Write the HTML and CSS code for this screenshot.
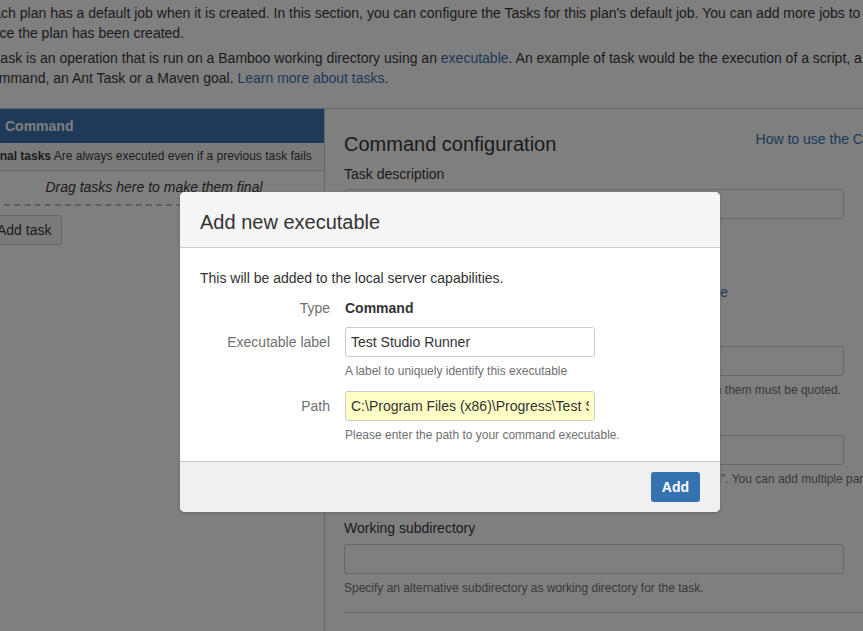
FILE: index.html
```html
<!DOCTYPE html>
<html>
<head>
<meta charset="utf-8">
<link rel="stylesheet" href="styles.css">
</head>
<body>
<div class="page">
  <div class="intro">
    <p>Each plan has a default job when it is created. In this section, you can configure the Tasks for this plan's default job. You can add more jobs to this plan once the plan has been created.</p>
    <p>A task is an operation that is run on a Bamboo working directory using an <a href="#">executable</a>. An example of task would be the execution of a script, a shell command, an Ant Task or a Maven goal. <a href="#">Learn more about tasks</a>.</p>
  </div>
  <div class="tasks">
    <div class="task-list">
      <div class="task-head">Command</div>
      <div class="final-row"><b>Final tasks</b> Are always executed even if a previous task fails</div>
      <div class="drop">Drag tasks here to make them final</div>
      <button class="btn">Add task</button>
    </div>
    <div class="config">
      <a class="help-link" href="#">How to use the Command task</a>
      <h2 class="title">Command configuration</h2>
      <div class="field first">
        <label class="lbl">Task description</label>
        <input class="text" type="text">
      </div>
      <div class="check-row"><input type="checkbox"> Disable this task</div>
      <div class="field exec">
        <label class="lbl">Executable</label>
        <div class="exec-row"><select class="sel"><option>Test Studio Runner</option></select><a href="#">Add new executable</a></div>
      </div>
      <div class="field arg">
        <label class="lbl">Argument</label>
        <input class="text" type="text">
        <div class="desc">Argument you want to pass to the command. Arguments with spaces in them must be quoted.</div>
      </div>
      <div class="field env">
        <label class="lbl">Environment variables</label>
        <input class="text" type="text">
        <div class="desc">Extra environment variables. e.g. JAVA_OPTS="-Xmx256m -Xms128m". You can add multiple parameters separated by a space.</div>
      </div>
      <div class="field wide">
        <label class="lbl">Working subdirectory</label>
        <input class="text" type="text">
        <div class="desc">Specify an alternative subdirectory as working directory for the task.</div>
      </div>
      <hr class="rule">
    </div>
  </div>
</div>

<div class="dialog">
  <div class="dlg-head">Add new executable</div>
  <div class="dlg-body">
    <p class="dlg-intro">This will be added to the local server capabilities.</p>
    <div class="frow"><span class="flabel">Type</span><strong class="fval">Command</strong></div>
    <div class="frow">
      <span class="flabel pad">Executable label</span>
      <div class="fcol">
        <input class="dlg-input" type="text" value="Test Studio Runner">
        <div class="fdesc">A label to uniquely identify this executable</div>
      </div>
    </div>
    <div class="frow">
      <span class="flabel pad">Path</span>
      <div class="fcol">
        <input class="dlg-input path" type="text" value="C:\Program Files (x86)\Progress\Test Studio\Bin\ArtOfTest.Runner.exe">
        <div class="fdesc">Please enter the path to your command executable.</div>
      </div>
    </div>
  </div>
  <div class="dlg-foot"><button class="primary">Add</button></div>
</div>
</body>
</html>
```

FILE: styles.css
```css
/* The page behind the modal is drawn with its colours already dimmed by the 50% black backdrop. */
* { box-sizing: border-box; }
html, body { margin: 0; padding: 0; }
html { overflow: hidden; background: #7f7f7f; }
body {
  font-family: "Liberation Sans", Arial, sans-serif;
  font-size: 14px;
  line-height: 20px;
  color: #1a1a1a;
  background: #7f7f7f;
  width: 863px;
  height: 631px;
  overflow: hidden;
  position: relative;
}
a { color: #1b3958; text-decoration: none; }

.page { margin-left: -16px; width: 960px; padding-top: 3px; }
.intro p { margin: 0 0 5px; }
.intro { padding-bottom: 15px; }

.tasks {
  display: grid;
  grid-template-columns: 341px 1fr;
  border-top: 1px solid #666;
  height: 600px;
}
.task-list { border-right: 1px solid #666; }
.task-head {
  background: #1e3a58;
  color: #7f7f7f;
  font-weight: bold;
  padding: 7px 21px;
}
.final-row {
  background: #7a7a7a;
  border-bottom: 1px solid #666;
  font-size: 12px;
  padding: 4px 5px;
  line-height: 19px;
}
.final-row b { font-size: 12px; }
.drop {
  text-align: center;
  font-style: italic;
  color: #1a1a1a;
  padding: 6px 0 7px;
  border-bottom: 2px dashed #5e5e5e;
}
.btn {
  margin: 9px 0 0 2px;
  height: 30px;
  padding: 0 10px;
  font: 14px "Liberation Sans", Arial, sans-serif;
  color: #1a1a1a;
  background: #7a7a7a;
  border: 1px solid #666;
  border-radius: 3px;
}

.config { padding: 0 0 0 19px; width: 622px; }
.help-link { float: right; margin-top: 20px; }
.title {
  margin: 20px 0 0;
  font-size: 20px;
  line-height: 30px;
  font-weight: normal;
  color: #1a1a1a;
}
.field { display: flex; flex-direction: column; }
.lbl { color: #1a1a1a; }
.text {
  height: 30px;
  border: 1px solid #666;
  border-radius: 3px;
  padding: 4px 5px;
  font: 14px "Liberation Sans", Arial, sans-serif;
  color: #1a1a1a;
  background: #7f7f7f;
  margin-top: 5px;
}
.field .text { width: 500px; }
.first { margin-top: 5px; }
.check-row { margin-top: 6px; height: 20px; }
.exec { margin-top: 7px; }
.exec-row { display: flex; align-items: center; gap: 8px; margin-top: 5px; }
.sel { width: 250px; height: 30px; background: #7f7f7f; border: 1px solid #666; }
.arg { margin-top: 14px; }
.env { margin-top: 12px; }
.desc { font-size: 12px; line-height: 16px; color: #383838; margin-top: 6px; }
.wide { margin-top: 15px; }
.wide .text { margin-top: 6px; }
.rule { border: 0; border-top: 1px solid #666; margin: 16px 0 0; }

.dialog {
  position: absolute;
  z-index: 11;
  left: 180px;
  top: 192px;
  width: 540px;
  height: 320px;
  background: #fff;
  border-radius: 5px;
  overflow: hidden;
  box-shadow: 0 1px 3px #666;
  display: flex;
  flex-direction: column;
  color: #333;
}
.dlg-head {
  background: #f5f5f5;
  border-bottom: 1px solid #ccc;
  padding: 15px 20px 10px;
  font-size: 20px;
  line-height: 30px;
  color: #333;
}
.dlg-body { padding: 20px 20px 0; flex: 1; }
.dlg-intro { margin: 0 0 10px; }
.frow { display: flex; gap: 15px; margin-bottom: 9px; }
.flabel { width: 130px; text-align: right; color: #707070; flex: none; line-height: 20px; }
.pad { padding-top: 5px; }
.fval { color: #333; }
.fcol { display: flex; flex-direction: column; }
.dlg-input {
  width: 250px;
  height: 30px;
  border: 1px solid #ccc;
  border-radius: 3px;
  padding: 4px 5px;
  font: 14px "Liberation Sans", Arial, sans-serif;
  color: #333;
  background: #fff;
}
.path { background: #ffffc6; }
.fdesc { font-size: 12px; line-height: 16px; color: #707070; margin-top: 6px; margin-bottom: 3px; }
.dlg-foot {
  background: #f0f0f0;
  border-top: 1px solid #ccc;
  height: 51px;
  padding: 10px 20px;
  display: flex;
  justify-content: flex-end;
}
.primary {
  height: 30px;
  padding: 0 11px;
  background: #3572b0;
  color: #fff;
  border: 0;
  border-radius: 3px;
  font: bold 14px "Liberation Sans", Arial, sans-serif;
}
```
